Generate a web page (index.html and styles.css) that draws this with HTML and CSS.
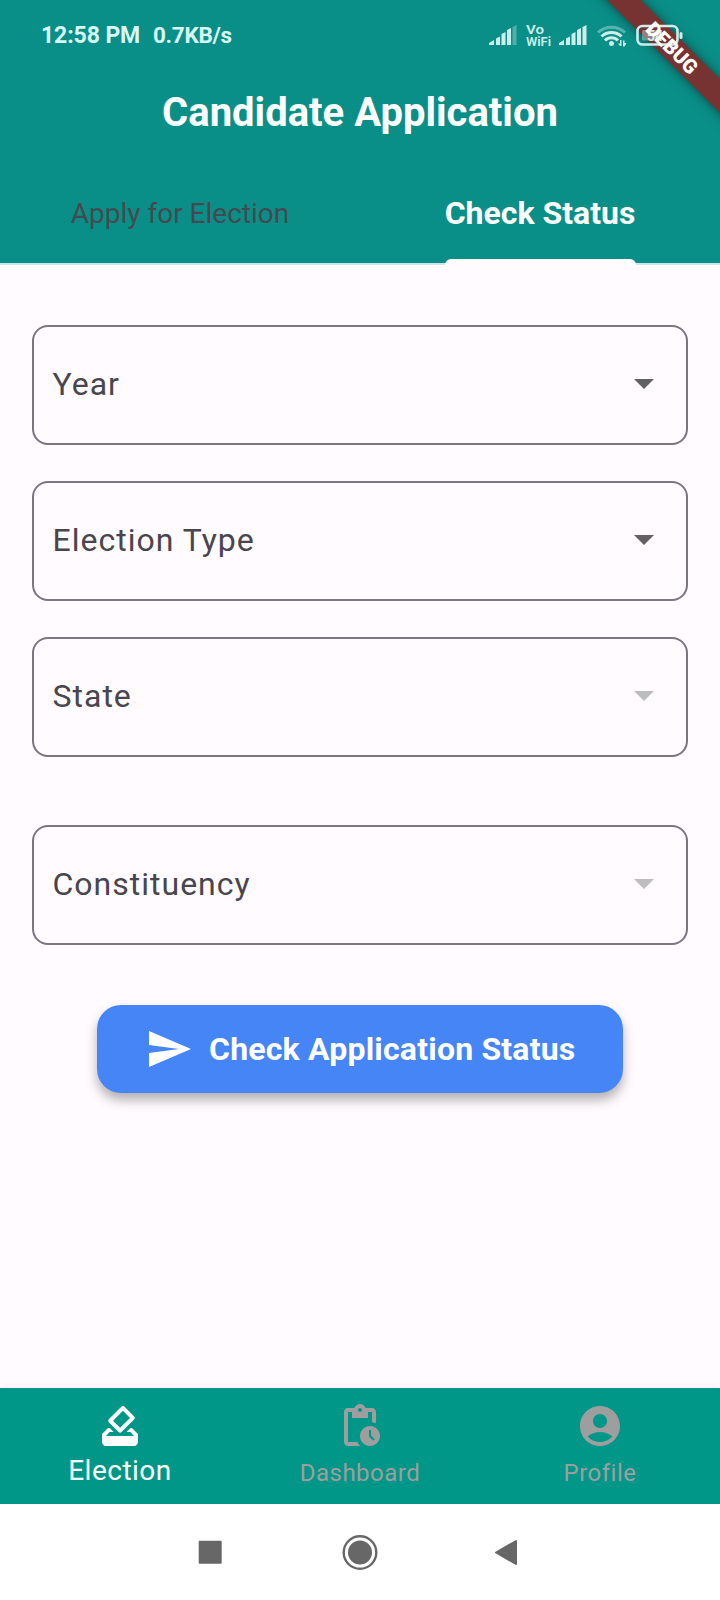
FILE: index.html
```html
<!DOCTYPE html>
<html lang="en">
<head>
<meta charset="utf-8">
<title>Candidate Application</title>
<link rel="stylesheet" href="styles.css">
</head>
<body>
<div class="app">
  <header class="header">
    <div class="status-bar">
      <span class="clock">12:58 PM</span><span class="speed">0.7KB/s</span>
      <svg class="signals" width="212" height="30" viewBox="0 0 212 30" fill="#cdeeea">
        <path d="M0 25v-2l5-3v5zM7 18.500l4-2V25H7zM12.500 14l4-2V25h-4zM18 10l4-2V25h-4z"/>
        <path d="M23.500 7l4-2V25h-4z" opacity=".35"/>
        <text class="vo" x="37" y="13.500" textLength="18" lengthAdjust="spacingAndGlyphs">Vo</text>
        <text class="vo" x="37" y="25.500" textLength="25" lengthAdjust="spacingAndGlyphs">WiFi</text>
        <path d="M70 25v-2l5-3v5zM77 18.500l4-2V25H77zM82.500 14l4-2V25h-4zM88 10l4-2V25h-4zM93.500 7l4-2V25h-4z"/>
        <g fill="none" stroke="#cdeeea" stroke-width="3">
          <path d="M109 12.500a20 20 0 0 1 27 0" opacity=".4"/>
          <path d="M112.500 16.500a14.500 14.500 0 0 1 20 0"/>
          <path d="M116 20.500a9 9 0 0 1 13 0"/>
        </g>
        <circle cx="122.500" cy="23.500" r="2.500"/>
        <path d="M131 20h1.500v6H131l-2-2.500h2zM134 26.500v-6h1.500v2.500h2l-2 3.500z"/>
        <rect x="148.500" y="6" width="40" height="18.500" rx="5" fill="none" stroke="#cdeeea" stroke-width="2.600"/>
        <rect x="153" y="10" width="18" height="10.500" rx="1.500" opacity=".4"/>
        <text class="charge" x="158" y="20.500">54</text>
        <rect x="190.500" y="12" width="3" height="7" rx="1.500"/>
      </svg>
    </div>
    <h1 class="title">Candidate Application</h1>
    <nav class="tabs">
      <div class="tab">Apply for Election</div>
      <div class="tab tab-active"><span class="tab-label">Check Status</span></div>
    </nav>
    <div class="debug-clip"><div class="debug-banner debug-ribbon"></div></div>
    <div class="debug-clip debug-front"><div class="debug-banner">DEBUG</div></div>
  </header>
  <main class="form">
    <div class="field"><span>Year</span><i class="arrow"></i></div>
    <div class="field"><span>Election Type</span><i class="arrow"></i></div>
    <div class="field"><span>State</span><i class="arrow arrow-disabled"></i></div>
    <div class="field field-spaced"><span>Constituency</span><i class="arrow arrow-disabled"></i></div>
    <button class="submit">
      <svg width="48" height="48" viewBox="0 0 24 24" fill="#fff"><path d="M2.010 21L23 12 2.010 3 2 10l15 2-15 2z"/></svg>
      <span>Check Application Status</span>
    </button>
  </main>
  <nav class="bottom-nav">
    <div class="item item-active">
      <svg width="48" height="48" viewBox="0 0 24 24"><path d="M18 13h-.68l-2 2h1.910L19 17H5l1.780-2h2.050l-2-2H6l-3 3v4c0 1.100.89 2 1.990 2H19c1.100 0 2-.89 2-2v-4l-3-3zm-1-5.050l-4.950 4.950-3.540-3.540 4.950-4.950L17 7.950zm-4.240-5.660L6.390 8.660c-.39.39-.39 1.020 0 1.410l4.950 4.950c.39.39 1.020.39 1.410 0l6.360-6.360c.39-.39.39-1.020 0-1.410L14.160 2.300c-.38-.4-1.010-.4-1.400-.01z"/></svg>
      <span>Election</span>
    </div>
    <div class="item">
      <svg width="48" height="48" viewBox="0 0 24 24"><path d="M17 12c-2.760 0-5 2.240-5 5s2.240 5 5 5 5-2.240 5-5-2.240-5-5-5zm1.650 7.350L16.500 17.200V14h1v2.790l1.850 1.850-.7.71zM18 3h-3.180C14.400 1.840 13.300 1 12 1s-2.400.84-2.820 2H6c-1.100 0-2 .9-2 2v15c0 1.100.9 2 2 2h6.110c-.59-.57-1.070-1.250-1.420-2H6V5h2v3h8V5h2v5.080c.71.1 1.380.31 2 .6V5c0-1.100-.9-2-2-2zm-6 2c-.55 0-1-.45-1-1s.45-1 1-1 1 .45 1 1-.45 1-1 1z"/></svg>
      <span>Dashboard</span>
    </div>
    <div class="item">
      <svg width="48" height="48" viewBox="0 0 24 24"><path d="M12 2C6.480 2 2 6.480 2 12s4.480 10 10 10 10-4.480 10-10S17.520 2 12 2zm0 4c1.930 0 3.500 1.570 3.500 3.500S13.930 13 12 13s-3.500-1.570-3.500-3.500S10.070 6 12 6zm0 14c-2.030 0-4.430-.82-6.140-2.880C7.550 15.800 9.680 15 12 15s4.450.8 6.140 2.120C16.430 19.180 14.030 20 12 20z"/></svg>
      <span>Profile</span>
    </div>
  </nav>
  <footer class="system-nav">
    <svg width="24" height="36" viewBox="0 0 24 36" fill="#676767"><rect x=".7" y="5.700" width="23" height="23" rx="1"/></svg>
    <svg width="36" height="36" viewBox="0 0 36 36"><circle cx="18" cy="17.500" r="16.300" fill="none" stroke="#676767" stroke-width="2.400"/><circle cx="18" cy="17.500" r="12" fill="#676767"/></svg>
    <svg width="24" height="36" viewBox="0 0 24 36" fill="#676767" stroke="#676767" stroke-width="2" stroke-linejoin="round"><path d="M2 17.500L22 6v23z"/></svg>
  </footer>
</div>
</body>
</html>
```
FILE: styles.css
```css
* { box-sizing: border-box; }
body { margin: 0; font-family: Roboto, "Liberation Sans", sans-serif; }
.app { width: 720px; height: 1600px; display: flex; flex-direction: column; background: #fffbff; }
.header { position: relative; height: 265px; background: #0a8f88; border-bottom: 2px solid #cfe5ee; flex: none; }
.status-bar { position: relative; z-index: 2; height: 71px; display: flex; padding: 0 19px 1px 41px; align-items: center; color: #d9f7f3; font-size: 23px; font-weight: 700; }
.clock { width: 112px; white-space: nowrap; letter-spacing: -.1px; }
.speed { font-size: 22.500px; letter-spacing: -.3px; }
.signals { margin-left: auto; }
.vo { font: 600 12.500px Roboto, sans-serif; }
.charge { font: 700 14px Roboto, sans-serif; }
.title { margin: 0; height: 84px; line-height: 84px; text-align: center; color: #fff; font-size: 40px; font-weight: 700; }
.tabs { display: flex; height: 110px; }
.tab { flex: 1; display: flex; justify-content: center; align-items: flex-start; line-height: 36px; padding-top: 41px; font-size: 28px; color: #454950; }
.tab-active { padding-top: 40px; color: #fff; font-size: 32px; font-weight: 700; }
.tab-label { position: relative; height: 70px; width: 191px; text-align: center; white-space: nowrap; }
.tab-label::after { content: ""; position: absolute; left: 0; right: 0; bottom: 0; height: 6px; background: #fff; border-radius: 6px 6px 0 0; }
.debug-clip { position: absolute; top: 0; right: 0; width: 160px; height: 160px; overflow: hidden; z-index: 1; }
.debug-front { z-index: 3; }
.debug-banner { position: absolute; left: -8px; top: 35.500px; width: 240px; height: 24px; line-height: 24px; color: #fff; font-size: 20px; font-weight: 900; text-align: center; transform: rotate(45deg); }
.debug-ribbon { background: #773232; box-shadow: 0 0 12px rgba(0,0,0,.5); }
.form { flex: 1; padding: 60px 32px 0; display: flex; flex-direction: column; }
.field { height: 120px; flex: none; margin-bottom: 36px; border: 2px solid #7a757f; border-radius: 16px; padding: 0 32px 2px 18.500px; display: flex; align-items: center; justify-content: space-between; font-size: 32px; letter-spacing: 1px; color: #48454e; }
.field-spaced { margin-top: 32px; margin-bottom: 60px; }
.arrow { border: 10px solid transparent; border-top-color: #616161; border-bottom: 0; }
.arrow-disabled { border-top-color: #bdbdbf; }
.submit { align-self: center; width: 526px; height: 88px; border: 0; border-radius: 24px; background: #4685f6; color: #fff; display: flex; align-items: center; padding: 0 0 0 48px; gap: 16px; font: 700 32px Roboto, sans-serif; letter-spacing: .2px; white-space: nowrap; box-shadow: 0 7px 12px rgba(0,0,0,.3); }
.bottom-nav { height: 116px; flex: none; background: #019788; display: flex; box-shadow: 0 -1px 8px rgba(0,0,0,.06); }
.item { flex: 1; display: flex; flex-direction: column; align-items: center; padding-top: 14px; color: #9e9e9e; fill: #9e9e9e; font-size: 24px; letter-spacing: .5px; line-height: 28px; }
.item span { margin-top: 9px; }
.item-active { color: #fff; fill: #fff; font-size: 28px; letter-spacing: .5px; }
.item-active span { margin-top: 7px; }
.system-nav { height: 96px; flex: none; background: #fff; display: grid; grid-template-columns: 24px 36px 24px; column-gap: 118px; align-items: center; padding: 1px 0 0 198px; }
.system-nav svg:nth-child(2) { margin-left: 1.500px; }
```
